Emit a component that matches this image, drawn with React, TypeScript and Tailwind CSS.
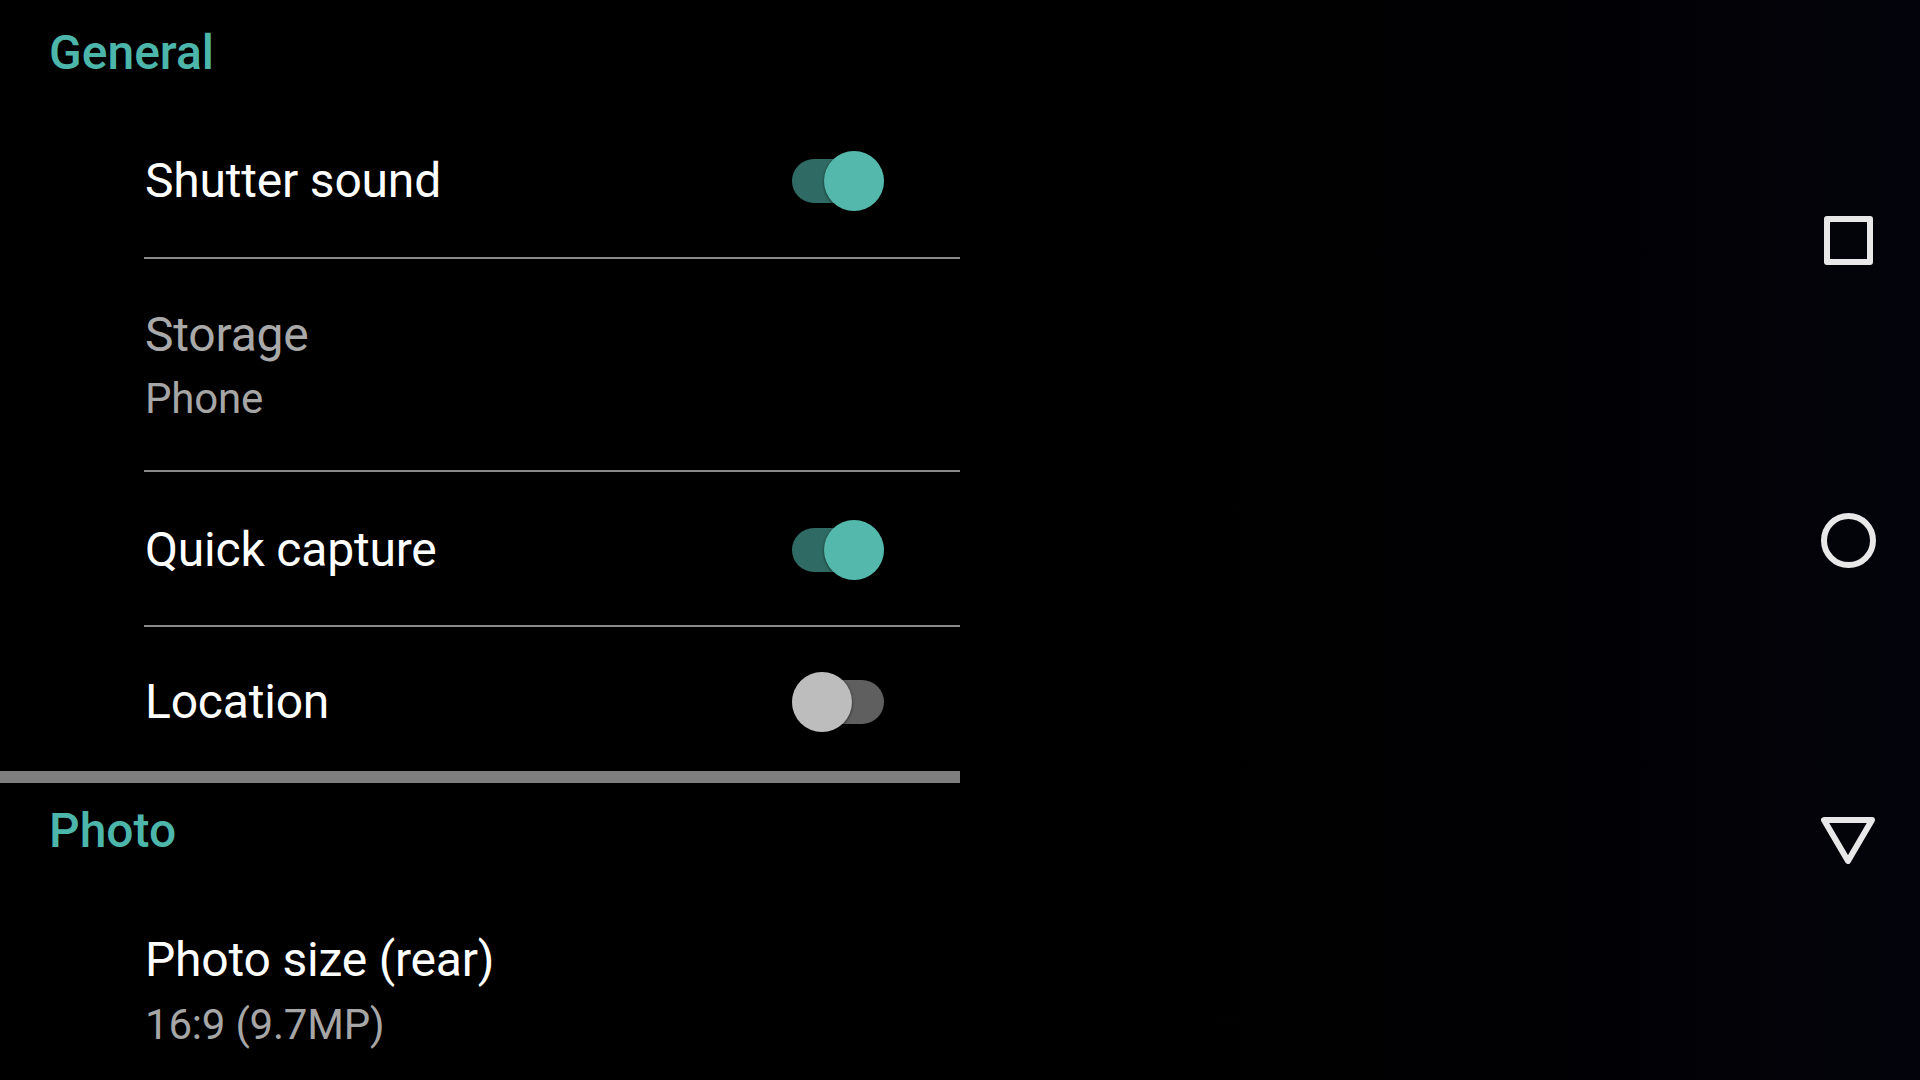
import { useState } from 'react';

type ToggleProps = {
  on: boolean;
  onChange: (v: boolean) => void;
};

function Toggle({ on, onChange }: ToggleProps) {
  return (
    <button
      type="button"
      aria-label="Toggle"
      onClick={() => onChange(!on)}
      className="relative h-[60px] w-[92px] shrink-0"
    >
      <span
        className={`absolute left-0 top-[8px] h-[44px] w-full rounded-full ${on ? 'bg-[#2f6b64]' : 'bg-[#5f5f5f]'}`}
      />
      <span
        className={`absolute top-0 h-[60px] w-[60px] rounded-full shadow-[0_1px_3px_rgba(0,0,0,0.6)] ${on ? 'right-0 bg-[#54b9ac]' : 'left-0 bg-[#bdbdbd]'}`}
      />
    </button>
  );
}

function Divider() {
  return <div className="ml-[144px] h-[2px] bg-[#8a8a8a]" />;
}

function Category({ title, className }: { title: string; className: string }) {
  return (
    <div className={`flex items-center pl-[49px] ${className}`}>
      <span className="text-[48px] font-medium leading-[56px] text-[#4db6ab]">{title}</span>
    </div>
  );
}

function SwitchRow({ title, className, on, onChange }: { title: string; className: string; on: boolean; onChange: (v: boolean) => void }) {
  return (
    <div className={`flex items-center justify-between pl-[145px] pr-[76px] ${className}`}>
      <span className="text-[48px] leading-[56px] tracking-[-0.2px] text-white">{title}</span>
      <Toggle on={on} onChange={onChange} />
    </div>
  );
}

function SummaryRow({ title, summary, muted, className }: { title: string; summary: string; muted?: boolean; className: string }) {
  return (
    <div className={`flex flex-col pl-[145px] ${className}`}>
      <span className={`text-[48px] leading-[56px] tracking-[-0.2px] ${muted ? 'text-[#a9a9a9]' : 'text-white'}`}>{title}</span>
      <span className="text-[42px] leading-[50px] tracking-[-0.2px] text-[#a6a6a6]">{summary}</span>
    </div>
  );
}

function NavBar() {
  return (
    <div className="flex w-[144px] flex-col items-center justify-center">
      <div className="flex h-[300px] items-center justify-center">
        <div className="h-[49px] w-[49px] rounded-[3px] border-[6px] border-[#e8e8e8]" />
      </div>
      <div className="flex h-[300px] items-center justify-center">
        <div className="h-[55px] w-[55px] rounded-full border-[6px] border-[#e8e8e8]" />
      </div>
      <div className="flex h-[300px] items-center justify-center">
        <svg width="54" height="47" viewBox="0 0 54 47" fill="none">
          <path d="M3 3 H51 L27 44 Z" stroke="#e8e8e8" strokeWidth="6" strokeLinejoin="round" />
        </svg>
      </div>
    </div>
  );
}

export default function App() {
  const [shutter, setShutter] = useState(true);
  const [quick, setQuick] = useState(true);
  const [location, setLocation] = useState(false);

  return (
    <div
      className="flex h-[1080px] w-[1920px] overflow-hidden bg-black"
      style={{ fontFamily: 'Roboto, "Noto Sans", sans-serif' }}
    >
      {/* settings list */}
      <div className="flex w-[960px] flex-col">
        <Category title="General" className="h-[104px] pt-[2px]" />
        <SwitchRow title="Shutter sound" className="h-[153px] pt-[1px]" on={shutter} onChange={setShutter} />
        <Divider />
        <SummaryRow title="Storage" summary="Phone" muted className="pb-[46px] pt-[48px] gap-[11px]" />
        <Divider />
        <SwitchRow title="Quick capture" className="h-[153px] pt-[2px]" on={quick} onChange={setQuick} />
        <Divider />
        <SwitchRow title="Location" className="h-[144px] pt-[6px]" on={location} onChange={setLocation} />
        <div className="h-[12px] bg-[#7f7f7f]" />
        <Category title="Photo" className="h-[94px] pt-[1px]" />
        <SummaryRow title="Photo size (rear)" summary="16:9 (9.7MP)" className="pt-[55px] gap-[12px]" />
      </div>

      {/* viewfinder area behind the panel */}
      <div className="flex flex-1 bg-gradient-to-r from-[#000000] via-[#010103] to-[#03030b]">
        <div className="flex-1" />
        <NavBar />
      </div>
    </div>
  );
}
